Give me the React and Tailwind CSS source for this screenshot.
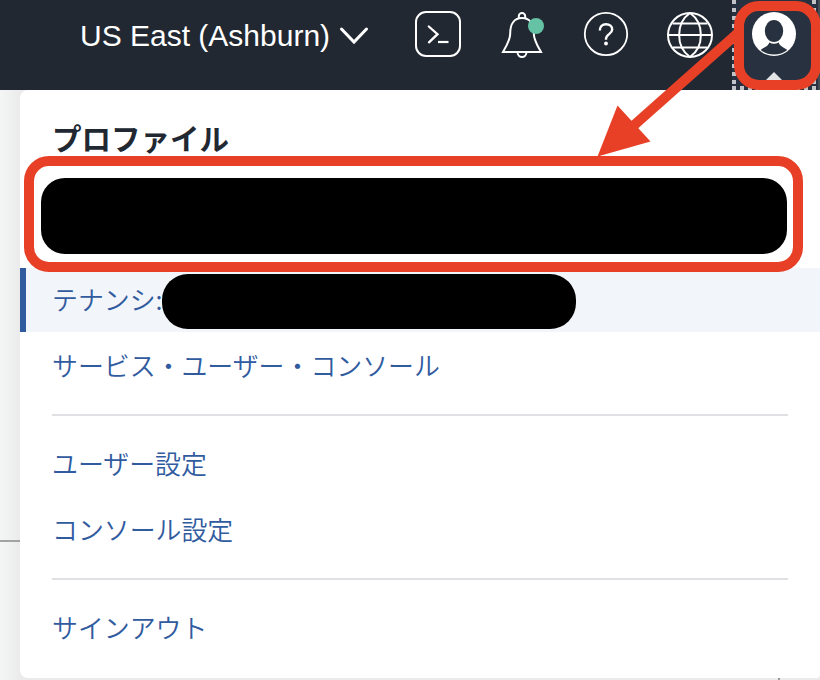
import React from "react";

const JP = "font-['Noto_Sans_CJK_JP',sans-serif]";

function TerminalIcon() {
  return (
    <svg className="h-[48px] w-[48px] shrink-0" viewBox="0 0 48 48" fill="none" stroke="#fff" strokeWidth="2">
      <rect x="2" y="2" width="44" height="44" rx="10" />
      <path d="M14.800 16.500 23.500 24.200 15 32.300" strokeWidth="2.300" strokeLinecap="round" />
      <path d="M24 32h10.500" strokeWidth="2.200" />
    </svg>
  );
}

function BellIcon() {
  return (
    <svg className="h-[48px] w-[44px] shrink-0" viewBox="0 0 44 48" fill="none" stroke="#fff" strokeWidth="2">
      <path d="M3 42c4-7 7.200-12 7.200-18.500C10.200 13 15 8 22 8s11.800 5 11.800 15.500C33.800 30 37 35 41 42z" />
      <path d="M18.800 8.500V6.300a3.200 3.200 0 0 1 6.400 0v2.200" />
      <path d="M17.500 42c0 6.600 9 6.600 9 0" />
      <circle cx="36" cy="16" r="8" fill="#66c2a5" stroke="none" />
    </svg>
  );
}

function HelpIcon() {
  return (
    <svg className="h-[48px] w-[48px] shrink-0" viewBox="0 0 48 48" fill="none" stroke="#fff" strokeWidth="1.800">
      <circle cx="24" cy="24" r="21.200" />
      <path d="M17.800 20.500c0-4.200 2.500-6.300 6.200-6.300s6.200 2.300 6.200 5.300c0 4.700-6.200 4.500-6.200 9.300v1" strokeWidth="2.400" />
      <circle cx="24" cy="33.500" r="1.900" fill="#fff" stroke="none" />
    </svg>
  );
}

function GlobeIcon() {
  return (
    <svg className="h-[48px] w-[48px] shrink-0" viewBox="0 0 48 48" fill="none" stroke="#fff" strokeWidth="2">
      <circle cx="24" cy="25" r="22" />
      <path d="M2 25h44M6.500 13.500h35M6.500 37.500h35" />
      <path d="M24 3C9.500 13 9.500 37 24 47M24 3c14.500 10 14.500 34 0 44" />
    </svg>
  );
}

function ProfileIcon() {
  return (
    <svg className="h-[44px] w-[44px]" viewBox="0 0 44 44">
      <circle cx="22" cy="22" r="22" fill="#fff" />
      <ellipse cx="22" cy="19" rx="9.200" ry="11" fill="#27313f" />
      <path d="M8.700 38c2.600-2.500 7.300-3.200 8.600-7.500 3 1.600 6.400 1.600 9.400 0 1.300 4.300 6 5 8.600 7.500-7.500 6-19.100 6-26.600 0z" fill="#27313f" />
    </svg>
  );
}

function MenuItem({ children, active }) {
  return (
    <a className={`flex h-16 items-center text-[25.900px] leading-none font-[350] whitespace-nowrap text-[#315b9f] ${active ? "border-l-[6px] border-[#315b9f] bg-[#f2f5fa] pb-[3px] pl-[26px]" : "pb-[3px] pl-8"}`}>
      {children}
    </a>
  );
}

function Divider() {
  return <hr className="mx-8 my-4 h-[2px] border-0 bg-[#e1e1e5]" />;
}

export default function App() {
  return (
    <div className={`relative h-[680px] w-[820px] overflow-hidden bg-[#f2f4f4] ${JP}`}>
      <header className="flex h-[90px] bg-[#212832]">
        <div className="flex h-[70px] w-[414px] items-center pl-[80px] text-white">
          <span className="w-[251px] font-['Liberation_Sans',sans-serif] text-[30px] whitespace-nowrap">US East (Ashburn)</span>
          <svg className="mt-[2px] ml-[8px] h-[20px] w-[30px]" viewBox="0 0 30 20" fill="none" stroke="#fff" strokeWidth="3">
            <path d="m2.500 3 12.500 13L27.500 3" strokeLinecap="round" />
          </svg>
        </div>
        <div className="flex h-[68px] w-[318px] items-center">
          <TerminalIcon />
          <div className="ml-[38px] flex"><BellIcon /></div>
          <div className="ml-[38px] flex"><HelpIcon /></div>
          <div className="ml-[36px] flex"><GlobeIcon /></div>
        </div>
        <div className="relative flex h-[90px] w-[88px] flex-col items-center bg-[#27313f] pt-[12px] pr-[4px]">
          <ProfileIcon />
          <svg className="mt-[16px] h-[9px] w-[18px]" viewBox="0 0 18 9"><path d="m0 9 9-9 9 9z" fill="#e4e4e6" /></svg>
          <svg className="absolute inset-0 h-[90px] w-[88px]" fill="none" stroke="#c3c4c8" strokeWidth="4" strokeDasharray="4 4">
            <path d="M2 0V90M0 88H84M82 0V90" />
            <path d="M87 0V90" stroke="#454b55" strokeWidth="2" strokeDasharray="none" />
          </svg>
        </div>
      </header>

      <div className="flex h-[590px] bg-[#ebebeb]">
        <div className="flex w-5 shrink-0 flex-col bg-linear-to-r from-[#f4f6f6] to-[#ebebeb] pt-[450px]">
          <div className="h-[2px] bg-[#a3a3a3]" />
        </div>
        <div className="flex grow flex-col">
          <nav className="h-[588px] rounded-l-lg rounded-br-[4px] bg-white">
            <h2 className="flex h-[98px] items-center pb-[3px] pl-8 text-[29.500px] leading-none font-bold text-[#212832]">プロファイル</h2>
            <div className="h-[80px] pl-[21px]">
              <div className="relative -top-[10px] h-[76px] w-[746px] rounded-[24px] bg-black" />
            </div>
            <MenuItem active>
              <span className="w-[110px]">テナンシ:</span>
              <span className="relative z-10 mt-[6px] h-[55px] w-[414px] rounded-[26px] bg-black" />
            </MenuItem>
            <div className="mt-[2px]"><MenuItem>サービス・ユーザー・コンソール</MenuItem></div>
            <Divider />
            <MenuItem>ユーザー設定</MenuItem>
            <div className="mt-[2px]"><MenuItem>コンソール設定</MenuItem></div>
            <Divider />
            <MenuItem>サインアウト</MenuItem>
          </nav>
          <div className="ml-[758px] h-[2px] w-[2px] bg-[#999]" />
        </div>
      </div>

      <svg className="pointer-events-none absolute inset-0 h-[680px] w-[820px]" viewBox="0 0 820 680">
        <rect x="29" y="161" width="769" height="106" rx="20" fill="none" stroke="#e84026" strokeWidth="10" />
        <rect x="739" y="6" width="77" height="79" rx="20" fill="none" stroke="#e84026" strokeWidth="10" />
        <path d="M738 33 632 127" stroke="#e84026" strokeWidth="10" />
        <path d="M597.500 156.500 617.500 105.500 650.500 141.500z" fill="#e84026" />
      </svg>
    </div>
  );
}
